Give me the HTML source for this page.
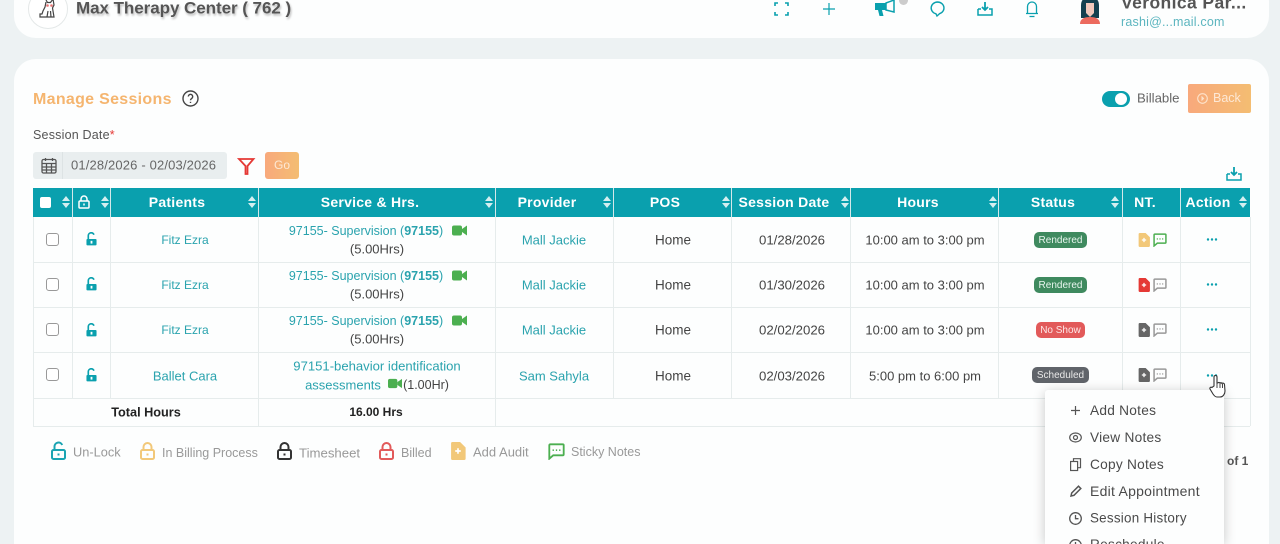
<!DOCTYPE html>
<html><head><meta charset="utf-8"><style>
*{box-sizing:border-box}
html,body{margin:0;width:1280px;height:544px;overflow:hidden;background:#edf2f3;font-family:"Liberation Sans",sans-serif}
#p{position:relative;width:1280px;height:544px;overflow:hidden;background:#edf2f3}
.a{position:absolute}
.t{position:absolute;white-space:nowrap;transform:translate(-50%,-50%);font-size:13px;color:#444;line-height:1}
.l{position:absolute;white-space:nowrap;transform:translateY(-50%);line-height:1}
.g{color:#2aa3ae}
.h{color:#fff;font-weight:700;font-size:14px;letter-spacing:.25px}
.v{position:absolute;width:1px;background:#e6ecec}
.hv{position:absolute;width:1px;top:188px;height:29px;background:#d5e8ea}
.r{position:absolute;left:33px;width:1217px;height:1px;background:#e6ecec}
.cb{position:absolute;left:46px;width:13px;height:13px;border:1.5px solid #999;border-radius:3px;background:#fff}
.b{position:absolute;height:16px;border-radius:5px;color:#e8f5ee;font-size:10px;line-height:17px;text-align:center}
.s{position:absolute;width:8px;height:12px}
.s:before,.s:after{content:"";position:absolute;left:0;border-left:4px solid transparent;border-right:4px solid transparent}
.s:before{top:0;border-bottom:5px solid #d4eef0}
.s:after{bottom:0;border-top:5px solid #d4eef0}
.m{position:absolute;left:1090px;font-size:13.700px;color:#4a4a4a;white-space:nowrap;transform:translateY(-50%);line-height:1;letter-spacing:.25px}
.leg{position:absolute;font-size:12.800px;color:#999;white-space:nowrap;transform:translateY(-50%);line-height:1}
svg{position:absolute;overflow:visible}
</style></head><body><div id="p">
<svg width="0" height="0" style="position:absolute"><defs>
<symbol id="lock" viewBox="0 0 12 15"><path d="M2.500 8V4a3.200 3.200 0 0 1 6.200-1.200" fill="none" stroke="#0aa0ae" stroke-width="1.800"/><rect x=".5" y="7.500" width="11" height="7" rx="1" fill="#0aa0ae"/><rect x="5" y="9.500" width="2" height="3" fill="#fff"/></symbol>
<symbol id="cam" viewBox="0 0 15 11"><rect x="0" y="0.500" width="10" height="10" rx="2" fill="#4caf50"/><path d="M10 4l5-3.500v10L10 7z" fill="#4caf50"/></symbol>
<symbol id="dots" viewBox="0 0 12 3"><circle cx="2" cy="1.500" r="1.200" fill="#0aa0ae"/><circle cx="6" cy="1.500" r="1.200" fill="#0aa0ae"/><circle cx="10" cy="1.500" r="1.200" fill="#0aa0ae"/></symbol>
<symbol id="doc" viewBox="0 0 11 13"><path d="M1.500 0H7l4 4v8a1 1 0 0 1-1 1H1.500a1 1 0 0 1-1-1V1a1 1 0 0 1 1-1z" fill="currentColor"/><path d="M5.500 4.500v4M3.500 6.500h4" stroke="#fff" stroke-width="1.200"/></symbol>
<symbol id="chat" viewBox="0 0 13 13"><path d="M1.700 1h9.600a.7.7 0 0 1 .7.7v7a.7.7 0 0 1-.7.7H4L1 12V1.700a.7.7 0 0 1 .7-.7z" fill="none" stroke="currentColor" stroke-width="1.400"/><path d="M3.500 5.500h1M6 5.500h1M8.500 5.500h1" stroke="currentColor" stroke-width="1.300"/></symbol>
<symbol id="dl" viewBox="0 0 16 15"><path d="M1 8v6h14V8h-3M4 8H1" fill="none" stroke="#0aa0ae" stroke-width="1.500"/><path d="M8 1v7M5 6l3 3 3-3" fill="none" stroke="#0aa0ae" stroke-width="1.800"/></symbol>
</defs></svg>

<div class="a" style="left:14px;top:-20px;width:1255px;height:58px;background:#fdfefe;border-radius:22px"></div>
<div class="a" style="left:14px;top:59px;width:1255px;height:485px;background:#fdfefe;border-radius:22px 22px 0 0"></div>

<!-- top bar -->
<div class="a" style="left:28px;top:-11px;width:40px;height:40px;border:1px solid #e4e8e8;border-radius:50%;background:#fff"></div>
<svg style="left:38px;top:-2px" width="20" height="22" viewBox="0 0 20 22" fill="none" stroke="#444" stroke-width="1.200"><path d="M8 2l1.500 2.500h3L15 1l1 6-1.500 3 1.500 9H9"/><path d="M8 4l-1 5-2 4-1 3H2v3h7"/><path d="M10 13l-1 6M12.500 13l.5 6"/><circle cx="9.500" cy="7.500" r="1.300" fill="#e57373" stroke="none"/><circle cx="13.500" cy="7.500" r="1.300" fill="#e57373" stroke="none"/></svg>
<div class="l" style="left:76px;top:8px;font-size:17px;font-weight:700;color:#555;letter-spacing:-.05px;text-shadow:1px 2px 2px #bbb">Max Therapy Center ( 762 )</div>
<svg style="left:774px;top:2px" width="15" height="14" viewBox="0 0 15 14" fill="none" stroke="#0aa0ae" stroke-width="1.600"><path d="M1 4V1h3M11 1h3v3M14 10v3h-3M4 13H1v-3"/></svg>
<svg style="left:822px;top:2px" width="14" height="14" viewBox="0 0 14 14" stroke="#0aa0ae" stroke-width="1.200"><path d="M7 1v12M1 7h12"/></svg>
<svg style="left:875px;top:0" width="21" height="17" viewBox="0 0 21 17"><path d="M0 3h11v7H7l1.500 6H4.500L3 10H0z" fill="#0aa0ae"/><path d="M11 3l8-3v12l-8-2z" fill="none" stroke="#0aa0ae" stroke-width="1.500"/></svg>
<div class="a" style="left:899px;top:-4px;width:9px;height:9px;border-radius:50%;background:#ccc"></div>
<svg style="left:930px;top:1px" width="15" height="16" viewBox="0 0 15 16" fill="none" stroke="#0aa0ae" stroke-width="1.400"><path d="M7.500 1a6.500 6 0 0 1 2 11.700L7 15l-1-2.200A6.500 6 0 0 1 7.500 1z"/></svg>
<svg style="left:977px;top:1px" width="16" height="15"><use href="#dl"/></svg>
<svg style="left:1025px;top:0" width="14" height="18" viewBox="0 0 14 18" fill="none" stroke="#0aa0ae" stroke-width="1.300"><path d="M2.500 13V6.500a4.500 4.500 0 0 1 9 0V13M1 13.500h12M4.500 16.500h5"/></svg>
<svg style="left:1079px;top:-2px" width="22" height="26" viewBox="0 0 22 26"><path d="M2 20V7a9 9 0 0 1 18 0v13z" fill="#14404f"/><path d="M7 5h8v10l-4 4-4-4z" fill="#f0c8bc"/><path d="M1 26c0-5 4-7 10-7s10 2 10 7z" fill="#ec6a5e"/></svg>
<div class="l" style="left:1121px;top:3px;font-size:17.500px;font-weight:700;color:#555;letter-spacing:.4px">Veronica Par...</div>
<div class="l" style="left:1121px;top:22px;font-size:12.500px;color:#5bb5bf;letter-spacing:.2px">rashi@...mail.com</div>

<!-- heading -->
<div class="l" style="left:33px;top:99px;font-size:16px;font-weight:700;color:#f5b56f;letter-spacing:.3px;margin-top:1px">Manage Sessions</div>
<svg style="left:182px;top:90px" width="17" height="17" viewBox="0 0 17 17" fill="none" stroke="#444" stroke-width="1.400"><circle cx="8.500" cy="8.500" r="7.500"/><path d="M6.300 6.500a2.200 2.200 0 1 1 3.400 1.900c-.8.500-1.200 1-1.200 1.900"/><path d="M8.500 11.800v1.200"/></svg>
<div class="a" style="left:1102px;top:91px;width:28px;height:16px;border-radius:8px;background:#0aa0ae"></div>
<div class="a" style="left:1115px;top:93px;width:12px;height:12px;border-radius:50%;background:#fff"></div>
<div class="l" style="left:1137px;top:98px;font-size:13.200px;color:#666">Billable</div>
<div class="a" style="left:1188px;top:84px;width:63px;height:29px;border-radius:2px;background:linear-gradient(90deg,#f8a97c,#f4bd72)"></div>
<svg style="left:1197px;top:93px" width="11" height="11" viewBox="0 0 11 11" fill="none" stroke="#fde3cb" stroke-width="1.100"><circle cx="5.500" cy="5.500" r="4.800"/><path d="M4.500 3.500l2 2-2 2" fill="#fde3cb"/></svg>
<div class="l" style="left:1213px;top:98px;font-size:12.500px;color:#fde8d5">Back</div>

<div class="l" style="left:33px;top:135px;font-size:12.500px;color:#555;letter-spacing:.2px">Session Date<span style="color:#e53935">*</span></div>
<div class="a" style="left:33px;top:152px;width:194px;height:27px;border-radius:3px;background:#e9eeef"></div>
<div class="a" style="left:62px;top:152px;width:1px;height:27px;background:#dde3e4"></div>
<svg style="left:41px;top:157px" width="16" height="17" viewBox="0 0 16 17" fill="none" stroke="#555" stroke-width="1.300"><rect x="1" y="2.500" width="14" height="13.500" rx="1.500"/><path d="M1 6.500h14M1 10h14M1 13h14M5.500 6.500V16M10.500 6.500V16M4.500 1v3M11.500 1v3"/></svg>
<div class="l" style="left:71px;top:165px;font-size:13px;color:#666;letter-spacing:.15px">01/28/2026 - 02/03/2026</div>
<svg style="left:238px;top:158px" width="17" height="17" viewBox="0 0 17 17" fill="none" stroke="#e53935" stroke-width="1.800"><path d="M1 1h14.500L9.500 8v8H7.500V8z"/></svg>
<div class="a" style="left:265px;top:152px;width:34px;height:27px;border-radius:3px;background:linear-gradient(90deg,#f8a97c,#f4bd72)"></div>
<div class="t" style="left:282px;top:165px;color:#fde8d5;font-size:12px">Go</div>
<svg style="left:1226px;top:166px" width="16" height="15"><use href="#dl"/></svg>

<!-- table header -->
<div class="a" style="left:33px;top:188px;width:1217px;height:29px;background:#0aa0ae"></div>
<div class="hv" style="left:72px"></div><div class="hv" style="left:110px"></div><div class="hv" style="left:258px"></div><div class="hv" style="left:495px"></div><div class="hv" style="left:613px"></div><div class="hv" style="left:731px"></div><div class="hv" style="left:850px"></div><div class="hv" style="left:998px"></div><div class="hv" style="left:1122px"></div><div class="hv" style="left:1180px"></div>
<div class="a" style="left:40px;top:197px;width:11px;height:11px;background:#fff;border-radius:2px"></div>
<svg style="left:78px;top:195px" width="12" height="14" viewBox="0 0 12 14" fill="none" stroke="#fff" stroke-width="1.500"><path d="M3 6V4a3 3 0 0 1 6 0v2"/><rect x="1" y="6" width="10" height="7" rx="1"/><path d="M6 8.500v2"/></svg>
<div class="t h" style="left:177px;top:202px">Patients</div>
<div class="t h" style="left:370px;top:202px">Service &amp; Hrs.</div>
<div class="t h" style="left:547px;top:202px">Provider</div>
<div class="t h" style="left:665px;top:202px">POS</div>
<div class="t h" style="left:784px;top:202px">Session Date</div>
<div class="t h" style="left:918px;top:202px">Hours</div>
<div class="t h" style="left:1053px;top:202px">Status</div>
<div class="t h" style="left:1145px;top:202px">NT.</div>
<div class="t h" style="left:1208px;top:202px">Action</div>
<div class="s" style="left:62px;top:196px"></div><div class="s" style="left:101px;top:196px"></div><div class="s" style="left:248px;top:196px"></div><div class="s" style="left:485px;top:196px"></div><div class="s" style="left:603px;top:196px"></div><div class="s" style="left:722px;top:196px"></div><div class="s" style="left:841px;top:196px"></div><div class="s" style="left:989px;top:196px"></div><div class="s" style="left:1111px;top:196px"></div><div class="s" style="left:1239px;top:196px"></div>

<!-- grid -->
<div class="v" style="left:33px;top:217px;height:209px"></div>
<div class="v" style="left:72px;top:217px;height:181px"></div>
<div class="v" style="left:110px;top:217px;height:181px"></div>
<div class="v" style="left:258px;top:217px;height:209px"></div>
<div class="v" style="left:495px;top:217px;height:209px"></div>
<div class="v" style="left:613px;top:217px;height:181px"></div>
<div class="v" style="left:731px;top:217px;height:181px"></div>
<div class="v" style="left:850px;top:217px;height:181px"></div>
<div class="v" style="left:998px;top:217px;height:181px"></div>
<div class="v" style="left:1122px;top:217px;height:181px"></div>
<div class="v" style="left:1180px;top:217px;height:181px"></div>
<div class="v" style="left:1250px;top:217px;height:209px"></div>
<div class="r" style="top:262px"></div><div class="r" style="top:307px"></div><div class="r" style="top:352px"></div><div class="r" style="top:398px"></div><div class="r" style="top:426px"></div>

<!-- row 1 -->
<div class="cb" style="top:233px"></div>
<svg style="left:86px;top:232px" width="11" height="14"><use href="#lock"/></svg>
<div class="t g" style="left:185px;top:240px;font-size:12px">Fitz Ezra</div>
<div class="t g" style="left:366px;top:231px;font-size:12.500px">97155- Supervision (<b>97155</b>)</div>
<svg style="left:452px;top:225px" width="15" height="11"><use href="#cam"/></svg>
<div class="t" style="left:377px;top:249px">(5.00Hrs)</div>
<div class="t g" style="left:554px;top:240px">Mall Jackie</div>
<div class="t" style="left:673px;top:240px;font-size:13.500px">Home</div>
<div class="t" style="left:792px;top:240px;font-size:13.200px">01/28/2026</div>
<div class="t" style="left:925px;top:240px">10:00 am to 3:00 pm</div>
<div class="b" style="left:1034px;top:232px;width:53px;background:#3f8a5f">Rendered</div>
<svg style="left:1138px;top:233px;color:#f2c879" width="12" height="14"><use href="#doc"/></svg>
<svg style="left:1153px;top:233px;color:#4caf50" width="14" height="14"><use href="#chat"/></svg>
<svg style="left:1206px;top:238px" width="12" height="3"><use href="#dots"/></svg>

<!-- row 2 -->
<div class="cb" style="top:278px"></div>
<svg style="left:86px;top:277px" width="11" height="14"><use href="#lock"/></svg>
<div class="t g" style="left:185px;top:285px;font-size:12px">Fitz Ezra</div>
<div class="t g" style="left:366px;top:276px;font-size:12.500px">97155- Supervision (<b>97155</b>)</div>
<svg style="left:452px;top:270px" width="15" height="11"><use href="#cam"/></svg>
<div class="t" style="left:377px;top:294px">(5.00Hrs)</div>
<div class="t g" style="left:554px;top:285px">Mall Jackie</div>
<div class="t" style="left:673px;top:285px;font-size:13.500px">Home</div>
<div class="t" style="left:792px;top:285px;font-size:13.200px">01/30/2026</div>
<div class="t" style="left:925px;top:285px">10:00 am to 3:00 pm</div>
<div class="b" style="left:1034px;top:277px;width:53px;background:#3f8a5f">Rendered</div>
<svg style="left:1138px;top:278px;color:#e53935" width="12" height="14"><use href="#doc"/></svg>
<svg style="left:1153px;top:278px;color:#999" width="14" height="14"><use href="#chat"/></svg>
<svg style="left:1206px;top:283px" width="12" height="3"><use href="#dots"/></svg>

<!-- row 3 -->
<div class="cb" style="top:323px"></div>
<svg style="left:86px;top:323px" width="11" height="14"><use href="#lock"/></svg>
<div class="t g" style="left:185px;top:330px;font-size:12px">Fitz Ezra</div>
<div class="t g" style="left:366px;top:321px;font-size:12.500px">97155- Supervision (<b>97155</b>)</div>
<svg style="left:452px;top:315px" width="15" height="11"><use href="#cam"/></svg>
<div class="t" style="left:377px;top:339px">(5.00Hrs)</div>
<div class="t g" style="left:554px;top:330px">Mall Jackie</div>
<div class="t" style="left:673px;top:330px;font-size:13.500px">Home</div>
<div class="t" style="left:792px;top:330px;font-size:13.200px">02/02/2026</div>
<div class="t" style="left:925px;top:330px">10:00 am to 3:00 pm</div>
<div class="b" style="left:1036px;top:322px;width:49px;background:#e25a5a;color:#fde8e8">No Show</div>
<svg style="left:1138px;top:323px;color:#666" width="12" height="14"><use href="#doc"/></svg>
<svg style="left:1153px;top:323px;color:#999" width="14" height="14"><use href="#chat"/></svg>
<svg style="left:1206px;top:328px" width="12" height="3"><use href="#dots"/></svg>

<!-- row 4 -->
<div class="cb" style="top:368px"></div>
<svg style="left:86px;top:368px" width="11" height="14"><use href="#lock"/></svg>
<div class="t g" style="left:185px;top:376px">Ballet Cara</div>
<div class="t g" style="left:377px;top:366px;font-size:13.100px">97151-behavior identification</div>
<div class="t g" style="left:343px;top:385px">assessments</div>
<svg style="left:388px;top:378px" width="14" height="11"><use href="#cam"/></svg>
<div class="t" style="left:426px;top:385px;font-size:12.500px">(1.00Hr)</div>
<div class="t g" style="left:554px;top:376px">Sam Sahyla</div>
<div class="t" style="left:673px;top:376px;font-size:13.500px">Home</div>
<div class="t" style="left:792px;top:376px;font-size:13.200px">02/03/2026</div>
<div class="t" style="left:925px;top:376px">5:00 pm to 6:00 pm</div>
<div class="b" style="left:1032px;top:367px;width:57px;background:#60646a;color:#e8e8e8">Scheduled</div>
<svg style="left:1138px;top:368px;color:#666" width="12" height="14"><use href="#doc"/></svg>
<svg style="left:1153px;top:368px;color:#999" width="14" height="14"><use href="#chat"/></svg>
<svg style="left:1206px;top:374px" width="12" height="3"><use href="#dots"/></svg>

<!-- totals -->
<div class="t" style="left:146px;top:412.500px;font-weight:700;font-size:12.700px;color:#222">Total Hours</div>
<div class="t" style="left:376px;top:412px;font-weight:700;font-size:12px;color:#222">16.00 Hrs</div>

<!-- legend -->
<svg style="left:51px;top:442px" width="15" height="18" viewBox="0 0 15 18" fill="none" stroke="#1aa4b2" stroke-width="2"><path d="M3.500 8V4.500a4 4 0 0 1 7.700-1.500"/><rect x="1" y="8" width="13" height="9" rx="1.500"/><path d="M7.500 11.500v2"/></svg>
<div class="leg" style="left:73px;top:453px">Un-Lock</div>
<svg style="left:140px;top:442px" width="15" height="18" viewBox="0 0 15 18" fill="none" stroke="#f2c879" stroke-width="2"><path d="M3.500 8V5a4 4 0 0 1 8 0v3"/><rect x="1" y="8" width="13" height="9" rx="1.500"/><path d="M7.500 11.500v2"/></svg>
<div class="leg" style="left:162px;top:453px;font-size:12.500px">In Billing Process</div>
<svg style="left:277px;top:442px" width="15" height="18" viewBox="0 0 15 18" fill="none" stroke="#333" stroke-width="2"><path d="M3.500 8V5a4 4 0 0 1 8 0v3"/><rect x="1" y="8" width="13" height="9" rx="1.500"/><path d="M7.500 11.500v2"/></svg>
<div class="leg" style="left:299px;top:453px;font-size:13.200px">Timesheet</div>
<svg style="left:379px;top:442px" width="15" height="18" viewBox="0 0 15 18" fill="none" stroke="#e25a5a" stroke-width="2"><path d="M3.500 8V5a4 4 0 0 1 8 0v3"/><rect x="1" y="8" width="13" height="9" rx="1.500"/><path d="M7.500 11.500v2"/></svg>
<div class="leg" style="left:401px;top:453px;font-size:12.500px">Billed</div>
<svg style="left:450px;top:442px;color:#f2c879" width="16" height="18"><use href="#doc"/></svg>
<div class="leg" style="left:473px;top:452px;font-size:13px">Add Audit</div>
<svg style="left:548px;top:443px;color:#4caf50" width="17" height="17"><use href="#chat"/></svg>
<div class="leg" style="left:571px;top:452px;font-size:12.500px">Sticky Notes</div>
<div class="l" style="left:1227px;top:461px;font-size:12px;font-weight:700;color:#555">of 1</div>

<!-- dropdown: clipped to the frame edge -->
<div class="a" style="left:1045px;top:390px;width:179px;height:154px;background:#fdfefe;border-radius:3px 3px 0 0;box-shadow:0 2px 12px rgba(0,0,0,.22)"></div>
<svg style="left:1071px;top:406px" width="9" height="9" stroke="#555" stroke-width="1.200"><path d="M4.500 0v9M0 4.500h9"/></svg>
<div class="m" style="top:410.500px">Add Notes</div>
<svg style="left:1069px;top:432px" width="13" height="11" viewBox="0 0 13 11" fill="none" stroke="#555" stroke-width="1.200"><ellipse cx="6.500" cy="5.500" rx="5.800" ry="4.500"/><circle cx="6.500" cy="5.500" r="2"/></svg>
<div class="m" style="top:437.500px">View Notes</div>
<svg style="left:1070px;top:458px" width="11" height="13" viewBox="0 0 11 13" fill="none" stroke="#555" stroke-width="1.200"><rect x=".6" y="3.500" width="7" height="9"/><path d="M3.500 3.500V.7h7v9H7.600"/></svg>
<div class="m" style="top:464.500px">Copy Notes</div>
<svg style="left:1070px;top:485px" width="12" height="12" viewBox="0 0 12 12" fill="none" stroke="#555" stroke-width="1.500"><path d="M1 11l.7-3L8.500 1.200l2.300 2.300L4 10.300z"/></svg>
<div class="m" style="top:491px;font-size:14px">Edit Appointment</div>
<svg style="left:1069px;top:512px" width="13" height="13" viewBox="0 0 13 13" fill="none" stroke="#555" stroke-width="1.300"><circle cx="6.500" cy="6.500" r="5.800"/><path d="M6.500 3v3.700h3"/></svg>
<div class="m" style="top:518px;font-size:13.400px">Session History</div>
<svg style="left:1069px;top:539px;overflow:hidden" width="13" height="5" viewBox="0 0 13 5" fill="none" stroke="#555" stroke-width="1.300"><circle cx="6.500" cy="6.500" r="5.800"/><path d="M6.500 3v3.700h3"/></svg>
<div class="a" style="left:1090px;top:538px;height:6px;width:100px;overflow:hidden;font-size:13.700px;line-height:14px;color:#4a4a4a;letter-spacing:.25px;white-space:nowrap">Reschedule</div>

<!-- cursor -->
<svg style="left:1209px;top:374px" width="19" height="24" viewBox="0 0 19 24"><path d="M5 12V3a1.500 1.500 0 0 1 3 0v6l1-.2a1.500 1.500 0 0 1 2 .2 1.500 1.500 0 0 1 2 .5 1.500 1.500 0 0 1 2.500 1L16 17c0 3-2 6-5 6H8c-2 0-3-1.500-4-3l-3-5c-.5-1 .5-2.500 2-1.500z" fill="#fff" stroke="#333" stroke-width="1.100"/><path d="M8 9v5M11 9.500V14M13.500 10v4" stroke="#333" stroke-width=".9"/></svg>
</div></body></html>
